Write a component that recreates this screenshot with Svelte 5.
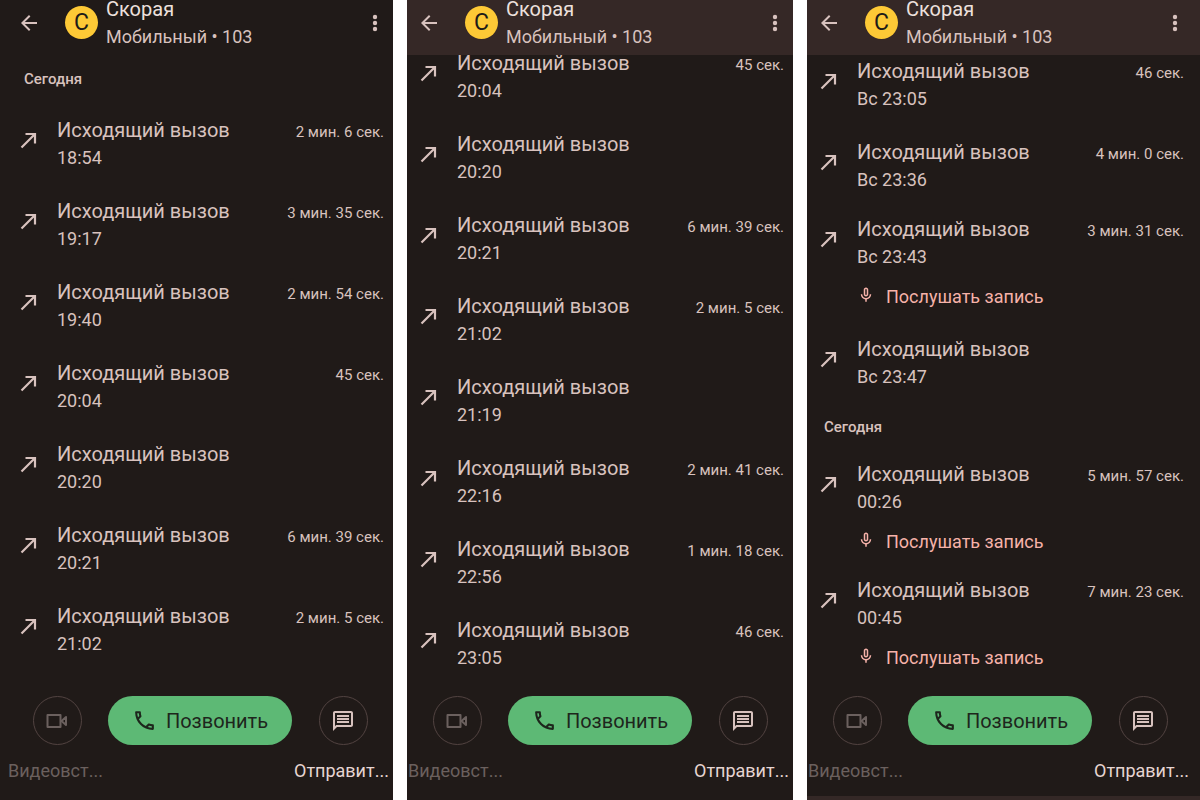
<script>
  const screens = [
    {
      scroll: 0,
      items: [
        { heading: 'Сегодня' },
        { time: '18:54', duration: '2 мин. 6 сек.' },
        { time: '19:17', duration: '3 мин. 35 сек.' },
        { time: '19:40', duration: '2 мин. 54 сек.' },
        { time: '20:04', duration: '45 сек.' },
        { time: '20:20' },
        { time: '20:21', duration: '6 мин. 39 сек.' },
        { time: '21:02', duration: '2 мин. 5 сек.' }
      ]
    },
    {
      scroll: 19,
      items: [
        { time: '20:04', duration: '45 сек.' },
        { time: '20:20' },
        { time: '20:21', duration: '6 мин. 39 сек.' },
        { time: '21:02', duration: '2 мин. 5 сек.' },
        { time: '21:19' },
        { time: '22:16', duration: '2 мин. 41 сек.' },
        { time: '22:56', duration: '1 мин. 18 сек.' },
        { time: '23:05', duration: '46 сек.' }
      ]
    },
    {
      scroll: 11,
      items: [
        { time: 'Вс 23:05', duration: '46 сек.' },
        { time: 'Вс 23:36', duration: '4 мин. 0 сек.' },
        { time: 'Вс 23:43', duration: '3 мин. 31 сек.', recorded: true },
        { time: 'Вс 23:47' },
        { heading: 'Сегодня' },
        { time: '00:26', duration: '5 мин. 57 сек.', recorded: true },
        { time: '00:45', duration: '7 мин. 23 сек.', recorded: true }
      ]
    }
  ];
</script>

<main class="screens">
  {#each screens as screen}
    <section class="screen" class:scrolled={screen.scroll > 0}>
      <header class="bar">
        <button aria-label="Назад">
          <svg width="24" height="24" viewBox="0 0 24 24" fill="currentColor">
            <path d="M20 11H7.83l5.59-5.59L12 4l-8 8 8 8 1.41-1.41L7.83 13H20v-2z"/>
          </svg>
        </button>
        <div class="avatar">С</div>
        <div class="contact">
          <h1>Скорая</h1>
          <p>Мобильный • 103</p>
        </div>
        <button aria-label="Ещё">
          <svg width="24" height="24" viewBox="0 0 24 24" fill="currentColor">
            <circle cx="12" cy="6" r="2.2"/>
            <circle cx="12" cy="12" r="2.2"/>
            <circle cx="12" cy="18" r="2.2"/>
          </svg>
        </button>
      </header>

      <div class="log">
        <ul style:margin-top="{-screen.scroll}px">
          {#each screen.items as item}
            {#if item.heading}
              <li class="heading">{item.heading}</li>
            {:else}
              <li class="call" class:recorded={item.recorded}>
                <svg class="direction" width="24" height="24" viewBox="0 0 24 24" fill="none" stroke="currentColor" stroke-width="2.2">
                  <path d="M4.5 19.500L17.500 6.500M8.500 6H18v9.500"/>
                </svg>
                <div class="details">
                  <div class="line">
                    <span class="title">Исходящий вызов</span>
                    {#if item.duration}
                      <span class="duration">{item.duration}</span>
                    {/if}
                  </div>
                  <div class="time">{item.time}</div>
                  {#if item.recorded}
                    <button class="listen">
                      <svg width="18" height="18" viewBox="0 0 24 24" fill="currentColor">
                        <path d="M12 14c1.66 0 3-1.34 3-3V5c0-1.66-1.34-3-3-3S9 3.34 9 5v6c0 1.66 1.34 3 3 3zm-1-9c0-.55.45-1 1-1s1 .45 1 1v6c0 .55-.45 1-1 1s-1-.45-1-1V5zm6 6c0 2.76-2.24 5-5 5s-5-2.24-5-5H5c0 3.53 2.61 6.43 6 6.92V21h2v-3.08c3.39-.49 6-3.39 6-6.92h-2z"/>
                      </svg>
                      Послушать запись
                    </button>
                  {/if}
                </div>
              </li>
            {/if}
          {/each}
        </ul>
      </div>

      <footer class="actions">
        <button class="action muted">
          <span class="circle">
            <svg width="24" height="24" viewBox="0 0 24 24" fill="none" stroke="currentColor" stroke-width="2" stroke-linejoin="round">
              <rect x="2.5" y="6" width="13" height="12"/>
              <path d="M16.5 12l4.5-4v8z"/>
            </svg>
          </span>
          <span class="label">Видеовст...</span>
        </button>
        <button class="dial">
          <svg width="25" height="25" viewBox="0 0 24 24" fill="currentColor">
            <path d="M6.54 5c.06.89.21 1.76.45 2.59l-1.2 1.2c-.41-1.2-.67-2.47-.76-3.79h1.51m9.86 12.02c.85.24 1.72.39 2.6.45v1.49c-1.32-.09-2.59-.35-3.8-.75l1.2-1.19M7.5 3H4c-.55 0-1 .45-1 1 0 9.39 7.61 17 17 17 .55 0 1-.45 1-1v-3.49c0-.55-.45-1-1-1-1.24 0-2.45-.2-3.57-.57-.1-.04-.21-.05-.31-.05-.26 0-.51.1-.71.29l-2.2 2.2c-2.83-1.45-5.15-3.76-6.59-6.59l2.2-2.2c.28-.28.36-.67.25-1.02C8.7 6.45 8.5 5.25 8.5 4c0-.55-.45-1-1-1z"/>
          </svg>
          Позвонить
        </button>
        <button class="action">
          <span class="circle">
            <svg width="24" height="24" viewBox="0 0 24 24" fill="currentColor">
              <path d="M4 4h16v12H5.17L4 17.17V4m0-2c-1.1 0-1.99.9-1.99 2L2 22l4-4h14c1.1 0 2-.9 2-2V4c0-1.1-.9-2-2-2H4zm2 10h12v2H6v-2zm0-3h12v2H6V9zm0-3h12v2H6V6z"/>
            </svg>
          </span>
          <span class="label">Отправит...</span>
        </button>
      </footer>
    </section>
  {/each}
</main>

<style>
  :global(body) {
    background: #ffffff;
  }

  .screens {
    display: grid;
    grid-template-columns: 393fr 386fr 393fr;
    gap: 14px;
    min-height: 100vh;
    font-family: Roboto, "Noto Sans", sans-serif;
  }

  /* neighbouring screens are trimmed by 7px where they meet */
  .screen {
    --trim-left: 7px;
    --trim-right: 7px;
    display: flex;
    flex-direction: column;
    min-width: 0;
    overflow: hidden;
    background: #201a18;
    color: #d8c2be;
  }

  .screen:first-child {
    --trim-left: 0px;
  }

  .screen:last-child {
    --trim-right: 0px;
    border-bottom: 4px solid #342826;
  }

  button {
    border: none;
    padding: 0;
    background: none;
    color: inherit;
    font: inherit;
    cursor: pointer;
  }

  svg {
    display: block;
    flex: none;
  }

  .bar {
    display: flex;
    align-items: center;
    box-sizing: border-box;
    height: 55px;
    padding: 0 calc(13px - var(--trim-right)) 10px calc(17px - var(--trim-left));
    position: relative;
    z-index: 1;
  }

  .scrolled .bar {
    background: #352826;
  }

  .avatar {
    flex: none;
    width: 33px;
    height: 33px;
    margin: 0 8px 0 24px;
    border-radius: 50%;
    background: #fdc936;
    color: #201a18;
    font-size: 23px;
    line-height: 33px;
    text-align: center;
  }

  .contact {
    flex: 1;
    min-width: 0;
    line-height: 28px;
    white-space: nowrap;
  }

  .contact h1 {
    margin: 0;
    color: #ede0dd;
    font-size: 20px;
    font-weight: 400;
  }

  .contact p {
    margin: 0;
    font-size: 18px;
  }

  .log {
    flex: 1;
  }

  .log ul {
    margin: 0;
    padding: 0;
    list-style: none;
  }

  .heading {
    padding-left: calc(24px - var(--trim-left));
    font-size: 15px;
    font-weight: 500;
    line-height: 48px;
  }

  .call {
    display: flex;
    gap: 16px;
    padding: 13px calc(16px - var(--trim-right)) 12px calc(17px - var(--trim-left));
    line-height: 28px;
  }

  .call.recorded {
    padding-top: 9px;
    padding-bottom: 0;
  }

  .direction {
    margin-top: 12px;
  }

  .details {
    flex: 1;
    min-width: 0;
  }

  .line {
    display: flex;
    align-items: baseline;
    justify-content: space-between;
    white-space: nowrap;
  }

  .title {
    font-size: 20px;
  }

  .duration {
    font-size: 15px;
    line-height: 20px;
  }

  .time {
    font-size: 18px;
  }

  .listen {
    display: flex;
    align-items: center;
    gap: 11px;
    height: 51px;
    color: #f6b2a9;
    font-size: 18px;
  }

  .listen svg {
    margin-bottom: 4px;
  }

  .actions {
    display: grid;
    grid-template-columns: 98px 1fr 98px;
    align-items: start;
    padding: 11px calc(8px - var(--trim-right)) 15px calc(8px - var(--trim-left));
  }

  .screen:last-child .actions {
    padding-bottom: 11px;
  }

  .action {
    display: flex;
    flex-direction: column;
    align-items: center;
    gap: 12px;
    min-width: 0;
  }

  .circle {
    display: flex;
    align-items: center;
    justify-content: center;
    box-sizing: border-box;
    width: 49px;
    height: 49px;
    border: 1px solid #524341;
    border-radius: 50%;
  }

  .label {
    align-self: flex-start;
    font-size: 18px;
    line-height: 28px;
    white-space: nowrap;
    color: #e6d5d2;
  }

  .muted,
  .muted .label {
    color: #6b605e;
  }

  .dial {
    display: flex;
    align-items: center;
    justify-content: center;
    gap: 9px;
    width: 184px;
    height: 49px;
    justify-self: center;
    border-radius: 25px;
    background: #5db975;
    color: #1d261c;
    font-size: 20px;
  }
</style>
